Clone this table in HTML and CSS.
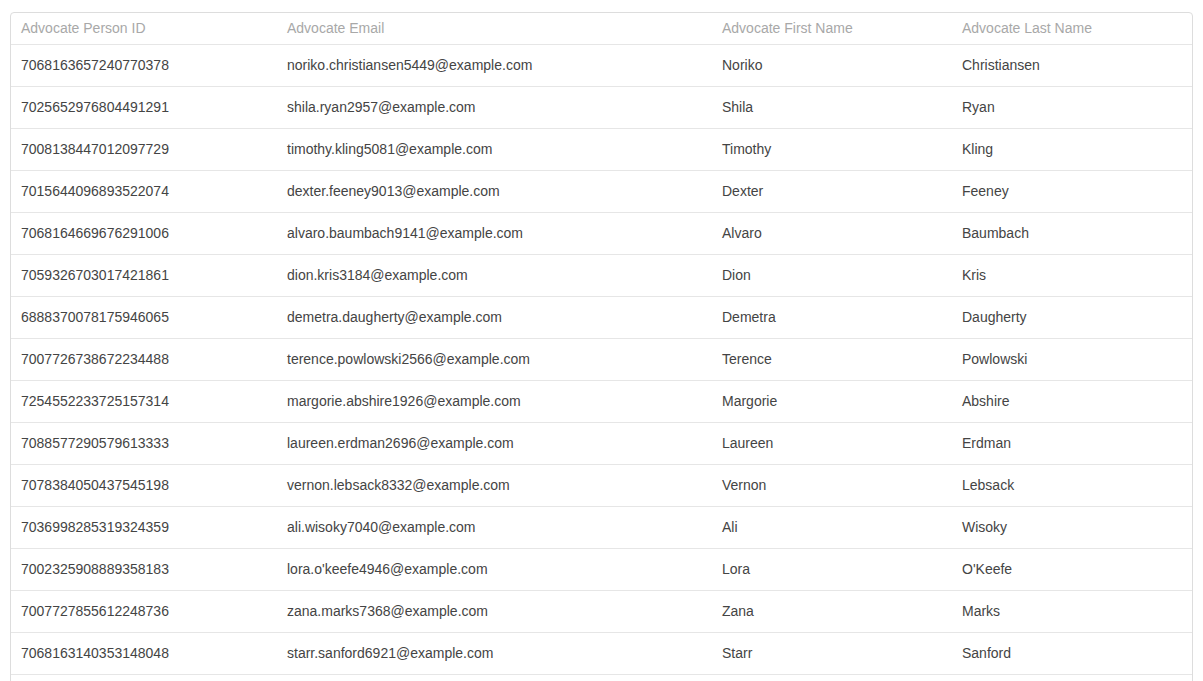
FILE: index.html
```html
<!DOCTYPE html>
<html>
<head>
<meta charset="utf-8">
<link rel="stylesheet" href="styles.css">
</head>
<body>
<div class="card">
<table class="grid">
<colgroup><col class="c1"><col class="c2"><col class="c3"><col class="c4"></colgroup>
<thead>
<tr><th>Advocate Person ID</th><th>Advocate Email</th><th>Advocate First Name</th><th>Advocate Last Name</th></tr>
</thead>
<tbody>
<tr><td>7068163657240770378</td><td>noriko.christiansen5449@example.com</td><td>Noriko</td><td>Christiansen</td></tr>
<tr><td>7025652976804491291</td><td>shila.ryan2957@example.com</td><td>Shila</td><td>Ryan</td></tr>
<tr><td>7008138447012097729</td><td>timothy.kling5081@example.com</td><td>Timothy</td><td>Kling</td></tr>
<tr><td>7015644096893522074</td><td>dexter.feeney9013@example.com</td><td>Dexter</td><td>Feeney</td></tr>
<tr><td>7068164669676291006</td><td>alvaro.baumbach9141@example.com</td><td>Alvaro</td><td>Baumbach</td></tr>
<tr><td>7059326703017421861</td><td>dion.kris3184@example.com</td><td>Dion</td><td>Kris</td></tr>
<tr><td>6888370078175946065</td><td>demetra.daugherty@example.com</td><td>Demetra</td><td>Daugherty</td></tr>
<tr><td>7007726738672234488</td><td>terence.powlowski2566@example.com</td><td>Terence</td><td>Powlowski</td></tr>
<tr><td>7254552233725157314</td><td>margorie.abshire1926@example.com</td><td>Margorie</td><td>Abshire</td></tr>
<tr><td>7088577290579613333</td><td>laureen.erdman2696@example.com</td><td>Laureen</td><td>Erdman</td></tr>
<tr><td>7078384050437545198</td><td>vernon.lebsack8332@example.com</td><td>Vernon</td><td>Lebsack</td></tr>
<tr><td>7036998285319324359</td><td>ali.wisoky7040@example.com</td><td>Ali</td><td>Wisoky</td></tr>
<tr><td>7002325908889358183</td><td>lora.o'keefe4946@example.com</td><td>Lora</td><td>O'Keefe</td></tr>
<tr><td>7007727855612248736</td><td>zana.marks7368@example.com</td><td>Zana</td><td>Marks</td></tr>
<tr><td>7068163140353148048</td><td>starr.sanford6921@example.com</td><td>Starr</td><td>Sanford</td></tr>
</tbody>
</table>
</div>
</body>
</html>
```

FILE: styles.css
```css
html, body {
  margin: 0;
  background: #fff;
}
body {
  padding: 12px 10px;
  font-family: "Liberation Sans", Arial, sans-serif;
  font-size: 14px;
  color: #444;
}
.card {
  border: 1px solid #ddd;
  border-radius: 4px;
  overflow: hidden;
  padding-bottom: 40px;
}
.grid {
  width: 100%;
  border-collapse: collapse;
  table-layout: fixed;
}
.c1 { width: 266px; }
.c2 { width: 435px; }
.c3 { width: 240px; }
.c4 { width: auto; }
.grid th {
  text-align: left;
  font-weight: normal;
  color: #a8a8a8;
  height: 29px;
  padding: 0 10px 2px;
  border-bottom: 1px solid #e6e6e6;
}
.grid td {
  height: 39px;
  padding: 0 10px 2px;
  border-bottom: 1px solid #e6e6e6;
  white-space: nowrap;
}
```
